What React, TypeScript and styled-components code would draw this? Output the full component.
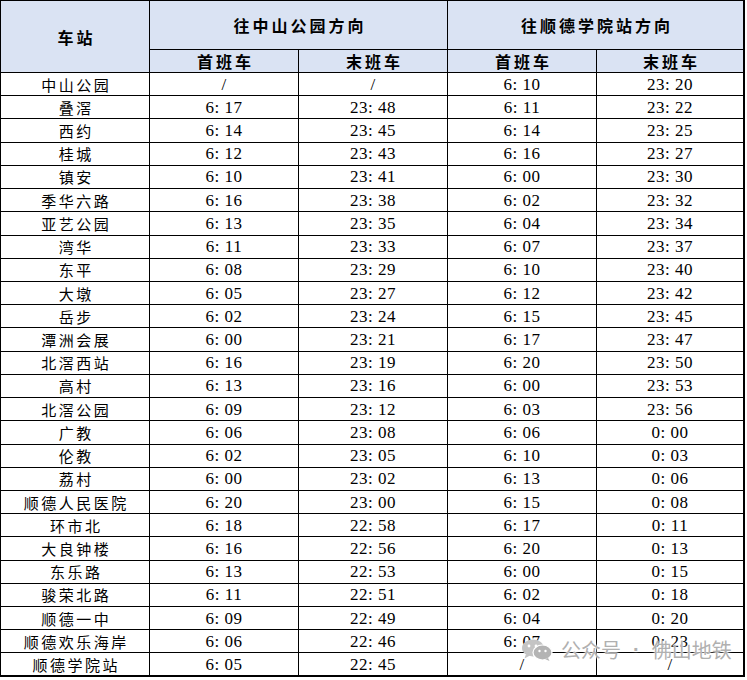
import React from "react";
import styled, { createGlobalStyle } from "styled-components";

type Row = {
  station: string;
  toZsFirst: string;
  toZsLast: string;
  toSdFirst: string;
  toSdLast: string;
};

const rows: Row[] = [
  ["中山公园", "/", "/", "6:10", "23:20"],
  ["叠滘", "6:17", "23:48", "6:11", "23:22"],
  ["西约", "6:14", "23:45", "6:14", "23:25"],
  ["桂城", "6:12", "23:43", "6:16", "23:27"],
  ["镇安", "6:10", "23:41", "6:00", "23:30"],
  ["季华六路", "6:16", "23:38", "6:02", "23:32"],
  ["亚艺公园", "6:13", "23:35", "6:04", "23:34"],
  ["湾华", "6:11", "23:33", "6:07", "23:37"],
  ["东平", "6:08", "23:29", "6:10", "23:40"],
  ["大墩", "6:05", "23:27", "6:12", "23:42"],
  ["岳步", "6:02", "23:24", "6:15", "23:45"],
  ["潭洲会展", "6:00", "23:21", "6:17", "23:47"],
  ["北滘西站", "6:16", "23:19", "6:20", "23:50"],
  ["高村", "6:13", "23:16", "6:00", "23:53"],
  ["北滘公园", "6:09", "23:12", "6:03", "23:56"],
  ["广教", "6:06", "23:08", "6:06", "0:00"],
  ["伦教", "6:02", "23:05", "6:10", "0:03"],
  ["荔村", "6:00", "23:02", "6:13", "0:06"],
  ["顺德人民医院", "6:20", "23:00", "6:15", "0:08"],
  ["环市北", "6:18", "22:58", "6:17", "0:11"],
  ["大良钟楼", "6:16", "22:56", "6:20", "0:13"],
  ["东乐路", "6:13", "22:53", "6:00", "0:15"],
  ["骏荣北路", "6:11", "22:51", "6:02", "0:18"],
  ["顺德一中", "6:09", "22:49", "6:04", "0:20"],
  ["顺德欢乐海岸", "6:06", "22:46", "6:07", "0:23"],
  ["顺德学院站", "6:05", "22:45", "/", "/"],
].map(([station, toZsFirst, toZsLast, toSdFirst, toSdLast]) => ({
  station,
  toZsFirst,
  toZsLast,
  toSdFirst,
  toSdLast,
}));

// 原表里时间写成 "6: 17" 的样子
const fmt = (t: string) => t.replace(":", ": ");

export default function App() {
  return (
    <>
      <GlobalStyle />
      <Sheet>
        <Table>
          <colgroup>
            <col style={{ width: 149 }} />
            <col style={{ width: 149 }} />
            <col style={{ width: 149 }} />
            <col style={{ width: 149 }} />
            <col />
          </colgroup>
          <thead>
            <TopHeadRow>
              <HeadCell rowSpan={2}>车站</HeadCell>
              <HeadCell colSpan={2}>往中山公园方向</HeadCell>
              <HeadCell colSpan={2}>往顺德学院站方向</HeadCell>
            </TopHeadRow>
            <SubHeadRow>
              <HeadCell>首班车</HeadCell>
              <HeadCell>末班车</HeadCell>
              <HeadCell>首班车</HeadCell>
              <HeadCell>末班车</HeadCell>
            </SubHeadRow>
          </thead>
          <tbody>
            {rows.map((r) => (
              <BodyRow key={r.station}>
                <StationCell>{r.station}</StationCell>
                <TimeCell>{fmt(r.toZsFirst)}</TimeCell>
                <TimeCell>{fmt(r.toZsLast)}</TimeCell>
                <TimeCell>{fmt(r.toSdFirst)}</TimeCell>
                <TimeCell>{fmt(r.toSdLast)}</TimeCell>
              </BodyRow>
            ))}
          </tbody>
        </Table>

        <Watermark>
          <WechatIcon />
          <span>公众号</span>
          <Dot>·</Dot>
          <span>佛山地铁</span>
        </Watermark>
      </Sheet>
    </>
  );
}

function WechatIcon() {
  return (
    <svg width="32" height="22" viewBox="0 0 32 22">
      <ellipse cx="12" cy="9" rx="11" ry="8.5" fill="#c4c4c4" />
      <path d="M5 15 L3.5 19.5 L9 16.5 Z" fill="#c4c4c4" />
      <ellipse cx="21.5" cy="13.5" rx="9.5" ry="7.5" fill="#b4b4b4" stroke="#fff" strokeWidth="1.2" />
      <path d="M27 19 L28.5 22 L24 20 Z" fill="#b4b4b4" />
      <circle cx="8" cy="7" r="1.4" fill="#fff" />
      <circle cx="15" cy="7" r="1.4" fill="#fff" />
      <circle cx="18.5" cy="12" r="1.2" fill="#fff" />
      <circle cx="24.5" cy="12" r="1.2" fill="#fff" />
    </svg>
  );
}

const GlobalStyle = createGlobalStyle`
  body {
    margin: 0;
    background: #fff;
    font-family: "Noto Sans CJK SC", "Liberation Serif", sans-serif;
  }
`;

const Sheet = styled.div`
  position: relative;
  width: 747px;
  height: 680px;
  overflow: hidden;
`;

const Table = styled.table`
  width: 745px;
  table-layout: fixed;
  border-collapse: collapse;
  border-top: 1px solid #b8b8b8;
  border-left: 1px solid #000;
  border-right: 2px solid #000;
  border-bottom: 2px solid #000;
  color: #000;
`;

const TopHeadRow = styled.tr`
  height: 49px;
`;

const SubHeadRow = styled.tr`
  height: 23px;
`;

const BodyRow = styled.tr`
  height: 23.23px;
`;

const Cell = styled.td`
  border: 1px solid #000;
  padding: 0;
  text-align: center;
  vertical-align: middle;
  line-height: 1;
  white-space: nowrap;
`;

const HeadCell = styled(Cell).attrs({ as: "th" })`
  background: #dae3f3;
  font-family: "Noto Sans CJK SC", sans-serif;
  font-size: 16px;
  font-weight: 700;
  letter-spacing: 3px;
  text-indent: 3px;
`;

const StationCell = styled(Cell)`
  font-family: "Noto Sans CJK SC", sans-serif;
  font-size: 15px;
  letter-spacing: 2.5px;
  text-indent: 2.5px;
`;

const TimeCell = styled(Cell)`
  font-family: "Liberation Serif", serif;
  font-size: 17px;
  letter-spacing: 0.5px;
`;

const Watermark = styled.div`
  position: absolute;
  left: 521px;
  top: 635px;
  display: flex;
  align-items: center;
  gap: 8px;
  font-family: "Noto Sans CJK SC", sans-serif;
  font-size: 20px;
  color: #b0b0b0;
  text-shadow: 0 0 2px #fff, 0 0 3px #fff;
  pointer-events: none;
`;

const Dot = styled.span`
  font-family: "Liberation Sans", sans-serif;
  font-weight: 700;
  margin: 0 4px;
`;
